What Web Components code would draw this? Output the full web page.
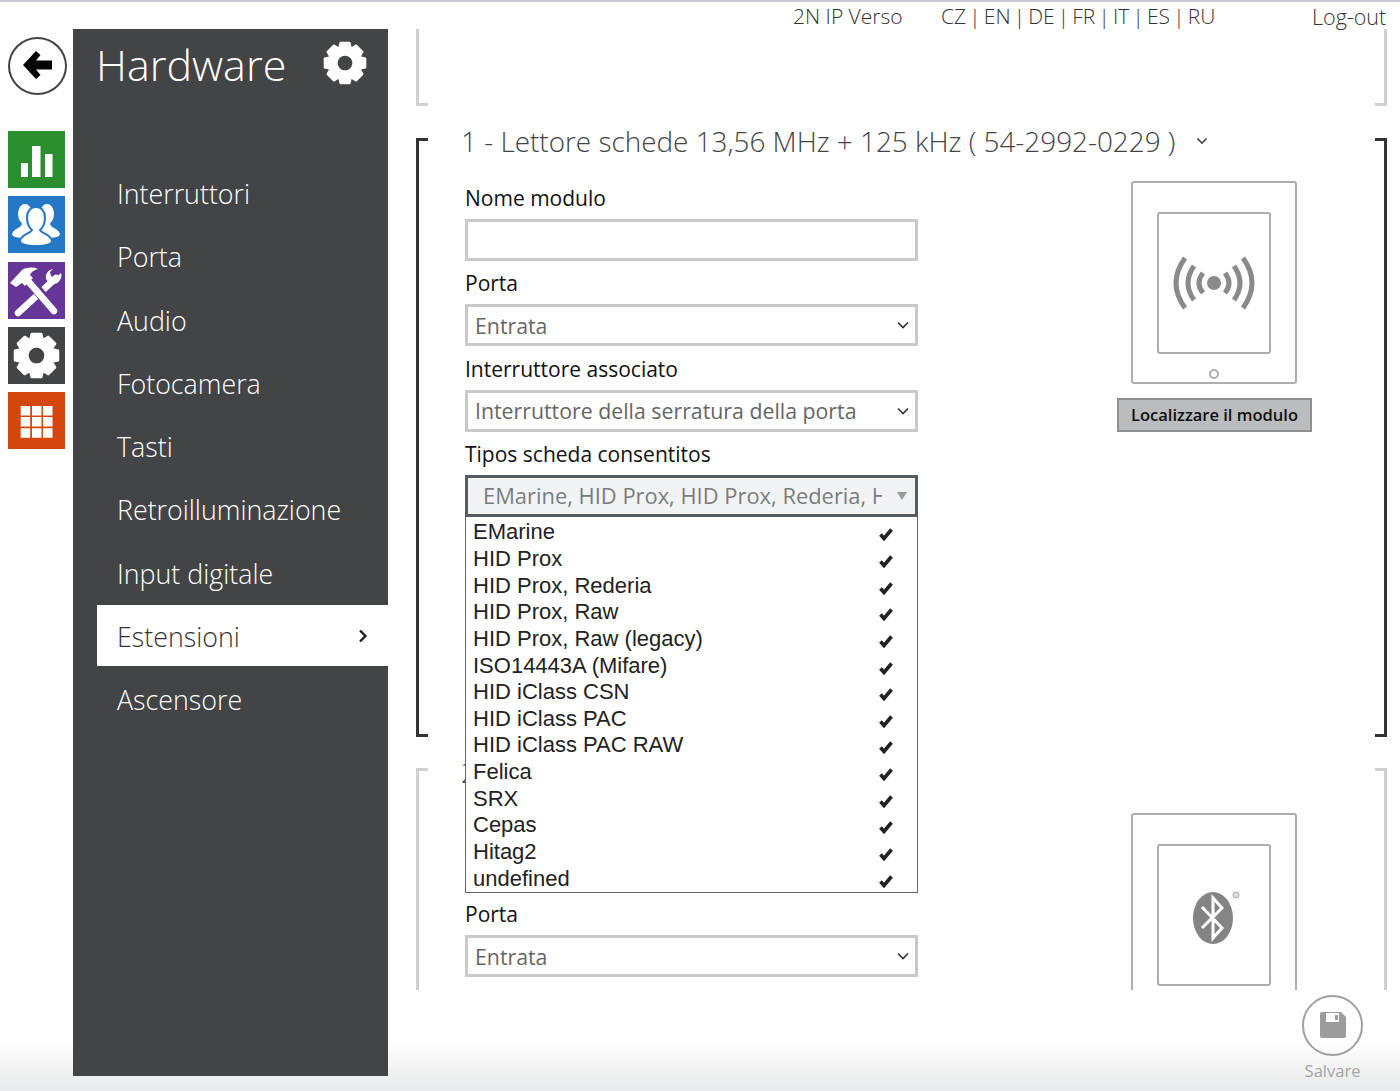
<!DOCTYPE html>
<html lang="it">
<head>
<meta charset="utf-8">
<title>Hardware</title>
<style>
  html, body { margin: 0; height: 1091px; overflow: hidden; }
  body {
    font-family: "Open Sans", "Liberation Sans", sans-serif;
    background: linear-gradient(#fff 1040px, #e8e9ea 1091px);
  }
</style>
</head>
<body>
<hw-page>
  <rail-nav slot="rail"></rail-nav>
  <side-menu slot="menu" heading="Hardware">
    <menu-item>Interruttori</menu-item>
    <menu-item>Porta</menu-item>
    <menu-item>Audio</menu-item>
    <menu-item>Fotocamera</menu-item>
    <menu-item>Tasti</menu-item>
    <menu-item>Retroilluminazione</menu-item>
    <menu-item>Input digitale</menu-item>
    <menu-item active>Estensioni</menu-item>
    <menu-item>Ascensore</menu-item>
  </side-menu>

  <top-bar slot="main"></top-bar>

  <bracket-panel slot="main" tone="light" style="height:77px;margin-bottom:32px"></bracket-panel>

  <bracket-panel slot="main" tone="dark" style="height:599px;margin-bottom:31px">
    <module-title>1 - Lettore schede 13,56 MHz + 125 kHz ( 54-2992-0229 )</module-title>
    <module-body>
      <form-field label="Nome modulo"><text-box></text-box></form-field>
      <form-field label="Porta"><select-box>Entrata</select-box></form-field>
      <form-field label="Interruttore associato"><select-box>Interruttore della serratura della porta</select-box></form-field>
      <form-field label="Tipos scheda consentitos" style="z-index:5">
        <multi-select summary="EMarine, HID Prox, HID Prox, Rederia, HID Prox, Raw">
          <multi-option>EMarine</multi-option>
          <multi-option>HID Prox</multi-option>
          <multi-option>HID Prox, Rederia</multi-option>
          <multi-option>HID Prox, Raw</multi-option>
          <multi-option>HID Prox, Raw (legacy)</multi-option>
          <multi-option>ISO14443A (Mifare)</multi-option>
          <multi-option>HID iClass CSN</multi-option>
          <multi-option>HID iClass PAC</multi-option>
          <multi-option>HID iClass PAC RAW</multi-option>
          <multi-option>Felica</multi-option>
          <multi-option>SRX</multi-option>
          <multi-option>Cepas</multi-option>
          <multi-option>Hitag2</multi-option>
          <multi-option>undefined</multi-option>
        </multi-select>
      </form-field>
      <device-card slot="side" kind="rfid" button="Localizzare il modulo"></device-card>
    </module-body>
  </bracket-panel>

  <bracket-panel slot="main" tone="light" style="height:400px">
    <module-title style="margin-top:-14px">2</module-title>
    <module-body>
      <form-field label=""><text-box></text-box></form-field>
      <form-field label="Porta"><select-box>Entrata</select-box></form-field>
      <device-card slot="side" kind="bluetooth" style="margin-top:1px"></device-card>
    </module-body>
  </bracket-panel>

  <save-button slot="footer">Salvare</save-button>
</hw-page>

<script>
// gear outline used in the rail and in the menu heading (100x100 box, hole cut with evenodd)
function gearPath() {
  let d = '';
  const teeth = 8, cx = 50, cy = 50;
  for (let i = 0; i < teeth; i++) {
    const a = (i / teeth) * Math.PI * 2 - Math.PI / 2;
    const pts = [[37, -0.40], [50, -0.22], [50, 0.22], [37, 0.40]];
    pts.forEach(([r, o], j) => {
      const x = cx + r * Math.cos(a + o), y = cy + r * Math.sin(a + o);
      d += (i === 0 && j === 0 ? 'M' : 'L') + x.toFixed(1) + ' ' + y.toFixed(1);
    });
  }
  return d + 'Z M50 30a20 20 0 1 0 .01 0Z';
}
const GEAR = `<svg viewBox="-3 -3 106 106" width="100%" height="100%"><path d="${gearPath()}" fill="#fff" fill-rule="evenodd" stroke="#fff" stroke-width="5" stroke-linejoin="round"/></svg>`;

class HwPage extends HTMLElement {
  constructor() {
    super();
    this.attachShadow({mode: 'open'});
    this.shadowRoot.innerHTML = `
      <style>
        :host { display: grid; grid-template-columns: 73px 315px 1fr; height: 1091px; box-sizing: border-box; border-top: 2px solid #c9c9d3; }
        .main { display: flex; flex-direction: column; margin-top: -2px; min-width: 0; }
        .scroll { height: 990px; overflow: hidden; padding: 0 13px 0 28px; box-sizing: border-box; flex: none; }
        .foot { display: flex; justify-content: flex-end; padding: 5px 37px 0 0; }
      </style>
      <slot name="rail"></slot>
      <slot name="menu"></slot>
      <div class="main">
        <div class="scroll"><slot name="main"></slot></div>
        <div class="foot"><slot name="footer"></slot></div>
      </div>`;
  }
}
customElements.define('hw-page', HwPage);

class RailNav extends HTMLElement {
  constructor() {
    super();
    this.attachShadow({mode: 'open'});
    this.shadowRoot.innerHTML = `
      <style>
        :host { display: flex; flex-direction: column; padding: 35px 0 0 8px; }
        .back { width: 59px; height: 58px; box-sizing: border-box; border: 2px solid #444; border-radius: 50%; margin-bottom: 36px; display: flex; align-items: center; justify-content: center; }
        .tile { width: 57px; height: 57px; margin-bottom: 8.25px; display: block; }
        .tile svg { display: block; }
        .gear { padding: 5px; box-sizing: border-box; background: #434446; }
      </style>
      <div class="back">
        <svg width="32" height="30" viewBox="0 0 32 30" style="margin-top:-2px"><path d="M1 15 14 1l4.500 4L14 10.500h16v9H14l4.500 5.500-4.500 4Z" fill="#000"/></svg>
      </div>
      <div class="tile">
        <svg width="57" height="57" viewBox="0 0 57 57"><rect width="57" height="57" fill="#2b8f2f"/><path d="M13 32h7v14h-7zM24 15h8.500v31H24zM37 23h7.500v23H37z" fill="#fff"/></svg>
      </div>
      <div class="tile">
        <svg width="57" height="57" viewBox="0 0 57 57"><rect width="57" height="57" fill="#2478c6"/>
          <g fill="#fff" stroke="#2478c6" stroke-width="2">
            <path d="M3 38c1-6 8-6 10-10-3-3-4-7-4-11 0-6 4-10 8-10s8 4 8 10c0 4-1 8-4 11 2 4 9 4 10 10 0 3-5 5-14 5S3 41 3 38Z"/>
            <path d="M25 38c1-6 8-6 10-10-3-3-4-7-4-11 0-6 4-10 8-10s8 4 8 10c0 4-1 8-4 11 2 4 9 4 10 10 0 3-5 5-14 5s-14-2-14-5Z"/>
            <path d="M12 45c1-7 10-7 12-11-4-3-5-8-5-13 0-6 4-10 9-10s9 4 9 10c0 5-1 10-5 13 2 4 11 4 12 11 0 3-6 5-16 5s-16-2-16-5Z"/>
          </g>
        </svg>
      </div>
      <div class="tile">
        <svg width="57" height="57" viewBox="0 0 57 57"><rect width="57" height="57" fill="#663696"/>
          <path d="M8 53 46 18" stroke="#fff" stroke-width="6.500" stroke-linecap="round" fill="none" transform="translate(2 -2)"/>
          <path d="M45 7c-5 1-8 5-7 10l3 4c4 2 9 1 11-3 1-2 2-4 1-7l-6 5-4-2-1-4Z" fill="#fff"/>
          <path d="M20 17 47 49" stroke="#663696" stroke-width="10" fill="none"/>
          <path d="M20 19 46 49" stroke="#fff" stroke-width="6.500" stroke-linecap="round" fill="none"/>
          <path d="M2 21 14 8c5-3 11-3 16-1-4 1-7 3-8 6l3 3-8 8-3-3-6 4Z" fill="#fff"/>
        </svg>
      </div>
      <div class="tile gear">${GEAR}</div>
      <div class="tile">
        <svg width="57" height="57" viewBox="0 0 57 57"><rect width="57" height="57" fill="#d4470c"/>
          <path d="M12.700 14h9.500v9.500h-9.500zM24 14h9.500v9.500H24zM35 14h9.500v9.500H35zM12.700 25h9.500v9.500h-9.500zM24 25h9.500v9.500H24zM35 25h9.500v9.500H35zM12.700 36.200h9.500v9.500h-9.500zM24 36.200h9.500v9.500H24zM35 36.200h9.500v9.500H35z" fill="#fff"/>
        </svg>
      </div>`;
  }
}
customElements.define('rail-nav', RailNav);

class SideMenu extends HTMLElement {
  constructor() {
    super();
    this.attachShadow({mode: 'open'});
    this.shadowRoot.innerHTML = `
      <style>
        :host { display: block; background: #434446; height: 1047px; margin-top: 27px; color: #fff; }
        .head { display: flex; align-items: flex-start; justify-content: space-between; height: 133px; padding: 0 21px 0 23px; box-sizing: border-box; }
        h1 { margin: 5px 0 0; font: 300 43px/62px "Open Sans", sans-serif; }
        .gear { width: 44px; height: 44px; margin-top: 12px; }
      </style>
      <div class="head"><h1></h1><div class="gear">${GEAR}</div></div>
      <slot></slot>`;
  }
  connectedCallback() {
    this.shadowRoot.querySelector('h1').textContent = this.getAttribute('heading');
  }
}
customElements.define('side-menu', SideMenu);

class MenuItem extends HTMLElement {
  constructor() {
    super();
    this.attachShadow({mode: 'open'});
    this.shadowRoot.innerHTML = `
      <style>
        :host { display: flex; align-items: center; justify-content: space-between; height: 61px; margin: 0 0 2.300px 24px; padding: 2px 20px 0; box-sizing: border-box; font: 300 26.800px "Open Sans", sans-serif; color: #fff; }
        :host([active]) { background: #fff; color: #333; }
        svg { display: none; margin-top: -2px; }
        :host([active]) svg { display: block; }
      </style>
      <slot></slot>
      <svg width="10" height="14" viewBox="0 0 10 14"><path d="M2 1.500 7.500 7 2 12.500" fill="none" stroke="#222" stroke-width="2.400"/></svg>`;
  }
}
customElements.define('menu-item', MenuItem);

class TopBar extends HTMLElement {
  constructor() {
    super();
    this.attachShadow({mode: 'open'});
    this.shadowRoot.innerHTML = `
      <style>
        :host { display: flex; height: 29px; align-items: center; padding-top: 3px; box-sizing: border-box; font: 300 21px "Open Sans", sans-serif; color: #333; }
        .device { margin-left: 377px; width: 148px; }
        .langs { width: 371px; word-spacing: -2.300px; }
        .out { font-size: 21.500px; }
      </style>
      <span class="device">2N IP Verso</span>
      <span class="langs">CZ | EN | DE | FR | IT | ES | RU</span>
      <span class="out">Log-out</span>`;
  }
}
customElements.define('top-bar', TopBar);

class BracketPanel extends HTMLElement {
  constructor() {
    super();
    this.attachShadow({mode: 'open'});
    this.shadowRoot.innerHTML = `
      <style>
        :host { --c: #d0d0d0; display: flow-root; box-sizing: border-box; padding: 0 46px; border: solid var(--c); border-width: 0 3px; }
        :host([tone="dark"]) { --c: #333; }
        :host { background:
          linear-gradient(var(--c), var(--c)) 0 0 / 9px 3px no-repeat,
          linear-gradient(var(--c), var(--c)) 100% 0 / 9px 3px no-repeat,
          linear-gradient(var(--c), var(--c)) 0 100% / 9px 3px no-repeat,
          linear-gradient(var(--c), var(--c)) 100% 100% / 9px 3px no-repeat; }
      </style>
      <slot></slot>`;
  }
  connectedCallback() {
    // the top panel has no upper tick, it runs on below the header
    if (!this.children.length) this.style.backgroundSize = '0 0, 0 0, 9px 3px, 9px 3px';
  }
}
customElements.define('bracket-panel', BracketPanel);

class ModuleTitle extends HTMLElement {
  constructor() {
    super();
    this.attachShadow({mode: 'open'});
    this.shadowRoot.innerHTML = `
      <style>
        :host { display: flex; align-items: center; height: 36px; margin: -15px 0 0 -4px; padding-bottom: 1px; box-sizing: border-box; font: 300 27.900px/36px "Open Sans", sans-serif; color: #444; white-space: nowrap; }
        svg { margin-left: 21px; }
      </style>
      <slot></slot>
      <svg width="12" height="8" viewBox="0 0 12 8"><path d="M1.500 1.500 6 6l4.500-4.500" fill="none" stroke="#444" stroke-width="1.600"/></svg>`;
  }
}
customElements.define('module-title', ModuleTitle);

class ModuleBody extends HTMLElement {
  constructor() {
    super();
    this.attachShadow({mode: 'open'});
    this.shadowRoot.innerHTML = `
      <style>
        :host { display: flex; align-items: flex-start; margin-top: 27px; }
        .form { width: 453px; flex: none; }
        .side { margin: -5px 0 0 199px; }
      </style>
      <div class="form"><slot></slot></div>
      <div class="side"><slot name="side"></slot></div>`;
  }
}
customElements.define('module-body', ModuleBody);

class FormField extends HTMLElement {
  constructor() {
    super();
    this.attachShadow({mode: 'open'});
    this.shadowRoot.innerHTML = `
      <style>
        :host { display: block; position: relative; height: 85.330px; font-family: "Open Sans", sans-serif; }
        label { display: block; height: 24px; margin-bottom: 9px; font-size: 21px; line-height: 24px; color: #111; }
      </style>
      <label></label>
      <slot></slot>`;
  }
  connectedCallback() {
    this.shadowRoot.querySelector('label').textContent = this.getAttribute('label');
  }
}
customElements.define('form-field', FormField);

class TextBox extends HTMLElement {
  constructor() {
    super();
    this.attachShadow({mode: 'open'});
    this.shadowRoot.innerHTML = `
      <style>
        :host { display: block; height: 42px; box-sizing: border-box; border: 3px solid #c9c9c9; background: #fff; }
      </style>`;
  }
}
customElements.define('text-box', TextBox);

class SelectBox extends HTMLElement {
  constructor() {
    super();
    this.attachShadow({mode: 'open'});
    this.shadowRoot.innerHTML = `
      <style>
        :host { display: flex; align-items: center; justify-content: space-between; height: 42px; box-sizing: border-box; border: 3px solid #c9c9c9; background: #fff; padding: 0 6px 0 7px; font: 400 21.300px "Open Sans", sans-serif; color: #666; white-space: nowrap; }
      </style>
      <slot></slot>
      <svg width="12" height="8" viewBox="0 0 12 8"><path d="M1 1.500 6 6.500l5-5" fill="none" stroke="#333" stroke-width="1.700"/></svg>`;
  }
}
customElements.define('select-box', SelectBox);

class MultiSelect extends HTMLElement {
  constructor() {
    super();
    this.attachShadow({mode: 'open'});
    this.shadowRoot.innerHTML = `
      <style>
        :host { display: block; position: relative; height: 42px; }
        .button { display: flex; align-items: center; height: 42px; box-sizing: border-box; border: 3px solid #565b5f; background: #f2f3f4; padding: 0 8px 0 15px; font: 400 21.900px "Open Sans", sans-serif; color: #7a7d80; }
        .text { width: 399px; overflow: hidden; white-space: nowrap; }
        .arrow { margin-left: auto; width: 0; height: 0; border: 5px solid transparent; border-top: 8px solid #999; border-bottom: 0; }
        .list { position: absolute; left: 0; right: 0; top: 42px; box-sizing: border-box; height: 376px; padding: 2px 0 0; background: #fff; border: solid #5f676c; border-width: 0 1px 1px; }
      </style>
      <div class="button"><div class="text"></div><div class="arrow"></div></div>
      <div class="list"><slot></slot></div>`;
  }
  connectedCallback() {
    this.shadowRoot.querySelector('.text').textContent = this.getAttribute('summary');
  }
}
customElements.define('multi-select', MultiSelect);

class MultiOption extends HTMLElement {
  constructor() {
    super();
    this.attachShadow({mode: 'open'});
    this.shadowRoot.innerHTML = `
      <style>
        :host { display: flex; align-items: center; justify-content: space-between; height: 26.650px; padding: 0 24px 0 7px; font: 400 22px/26px "Liberation Sans", Arial, sans-serif; color: #222; white-space: nowrap; }
        svg { margin-top: 4px; }
      </style>
      <slot></slot>
      <svg width="14" height="14" viewBox="0 0 14 14"><path d="M1.500 7.500 5 11.500 12.500 2.500" fill="none" stroke="#222" stroke-width="3.600"/></svg>`;
  }
}
customElements.define('multi-option', MultiOption);

class DeviceCard extends HTMLElement {
  constructor() {
    super();
    this.attachShadow({mode: 'open'});
    const kind = this.getAttribute('kind');
    const rfid = `<svg width="84" height="56" viewBox="0 0 84 56">
        <circle cx="42" cy="28" r="7" fill="#8a8a8a"/>
        <g fill="none" stroke="#8a8a8a" stroke-width="5">
          <path d="M31 18q-8 10 0 20M53 18q8 10 0 20"/>
          <path d="M22 11q-12 17 0 34M62 11q12 17 0 34"/>
          <path d="M13 3Q-5 28 13 53M71 3q18 25 0 50"/>
        </g>
      </svg>`;
    const bluetooth = `<svg width="52" height="60" viewBox="0 0 52 60">
        <ellipse cx="25" cy="33" rx="20" ry="26" fill="#848484"/>
        <path d="M14 22 34 43 25 53V13l9 10L14 43" fill="none" stroke="#fff" stroke-width="3"/>
        <circle cx="48" cy="10" r="3" fill="#ddd" stroke="#aaa" stroke-width="1"/>
      </svg>`;
    const isRfid = kind === 'rfid';
    this.shadowRoot.innerHTML = `
      <style>
        :host { display: flex; flex-direction: column; align-items: flex-start; width: 195px; }
        .outer { width: 166px; height: 203px; margin-left: 14px; box-sizing: border-box; border: 2px solid #aeaeae; border-radius: 3px; padding-top: 29px; display: flex; flex-direction: column; align-items: center; flex: none; }
        .inner { width: 114px; height: 142px; box-sizing: border-box; border: 2px solid #aeaeae; border-radius: 3px; display: flex; align-items: center; justify-content: center; flex: none; }
        .led { width: 10px; height: 10px; box-sizing: border-box; border: 2px solid #aeaeae; border-radius: 50%; margin-top: 15px; }
        button { margin-top: 14px; width: 195px; height: 34px; box-sizing: border-box; background: #bbbcbd; border: 2px solid #8f8f8f; padding: 0 0 2px; font: 600 16.500px "Open Sans", sans-serif; color: #111; }
      </style>
      <div class="outer">
        <div class="inner">${isRfid ? rfid : bluetooth}</div>
        ${isRfid ? '<div class="led"></div>' : ''}
      </div>
      ${this.hasAttribute('button') ? `<button>${this.getAttribute('button')}</button>` : ''}`;
  }
}
customElements.define('device-card', DeviceCard);

class SaveButton extends HTMLElement {
  constructor() {
    super();
    this.attachShadow({mode: 'open'});
    this.shadowRoot.innerHTML = `
      <style>
        :host { display: flex; flex-direction: column; align-items: center; width: 61px; font: 400 16.500px "Open Sans", sans-serif; color: #a4a5a7; }
        .circle { width: 61px; height: 61px; box-sizing: border-box; border: 2px solid #a0a0a0; border-radius: 50%; display: flex; align-items: center; justify-content: center; margin-bottom: 3px; }
      </style>
      <div class="circle">
        <svg width="26" height="26" viewBox="0 0 26 26" style="margin-top:-2px"><path d="M2 0h19l5 5v19a2 2 0 0 1-2 2H2a2 2 0 0 1-2-2V2a2 2 0 0 1 2-2Z" fill="#9c9c9c"/><path d="M6 1h13v9H6z" fill="#fff"/><path d="M15 3h3v5h-3z" fill="#9c9c9c"/></svg>
      </div>
      <slot></slot>`;
  }
}
customElements.define('save-button', SaveButton);
</script>
</body>
</html>
